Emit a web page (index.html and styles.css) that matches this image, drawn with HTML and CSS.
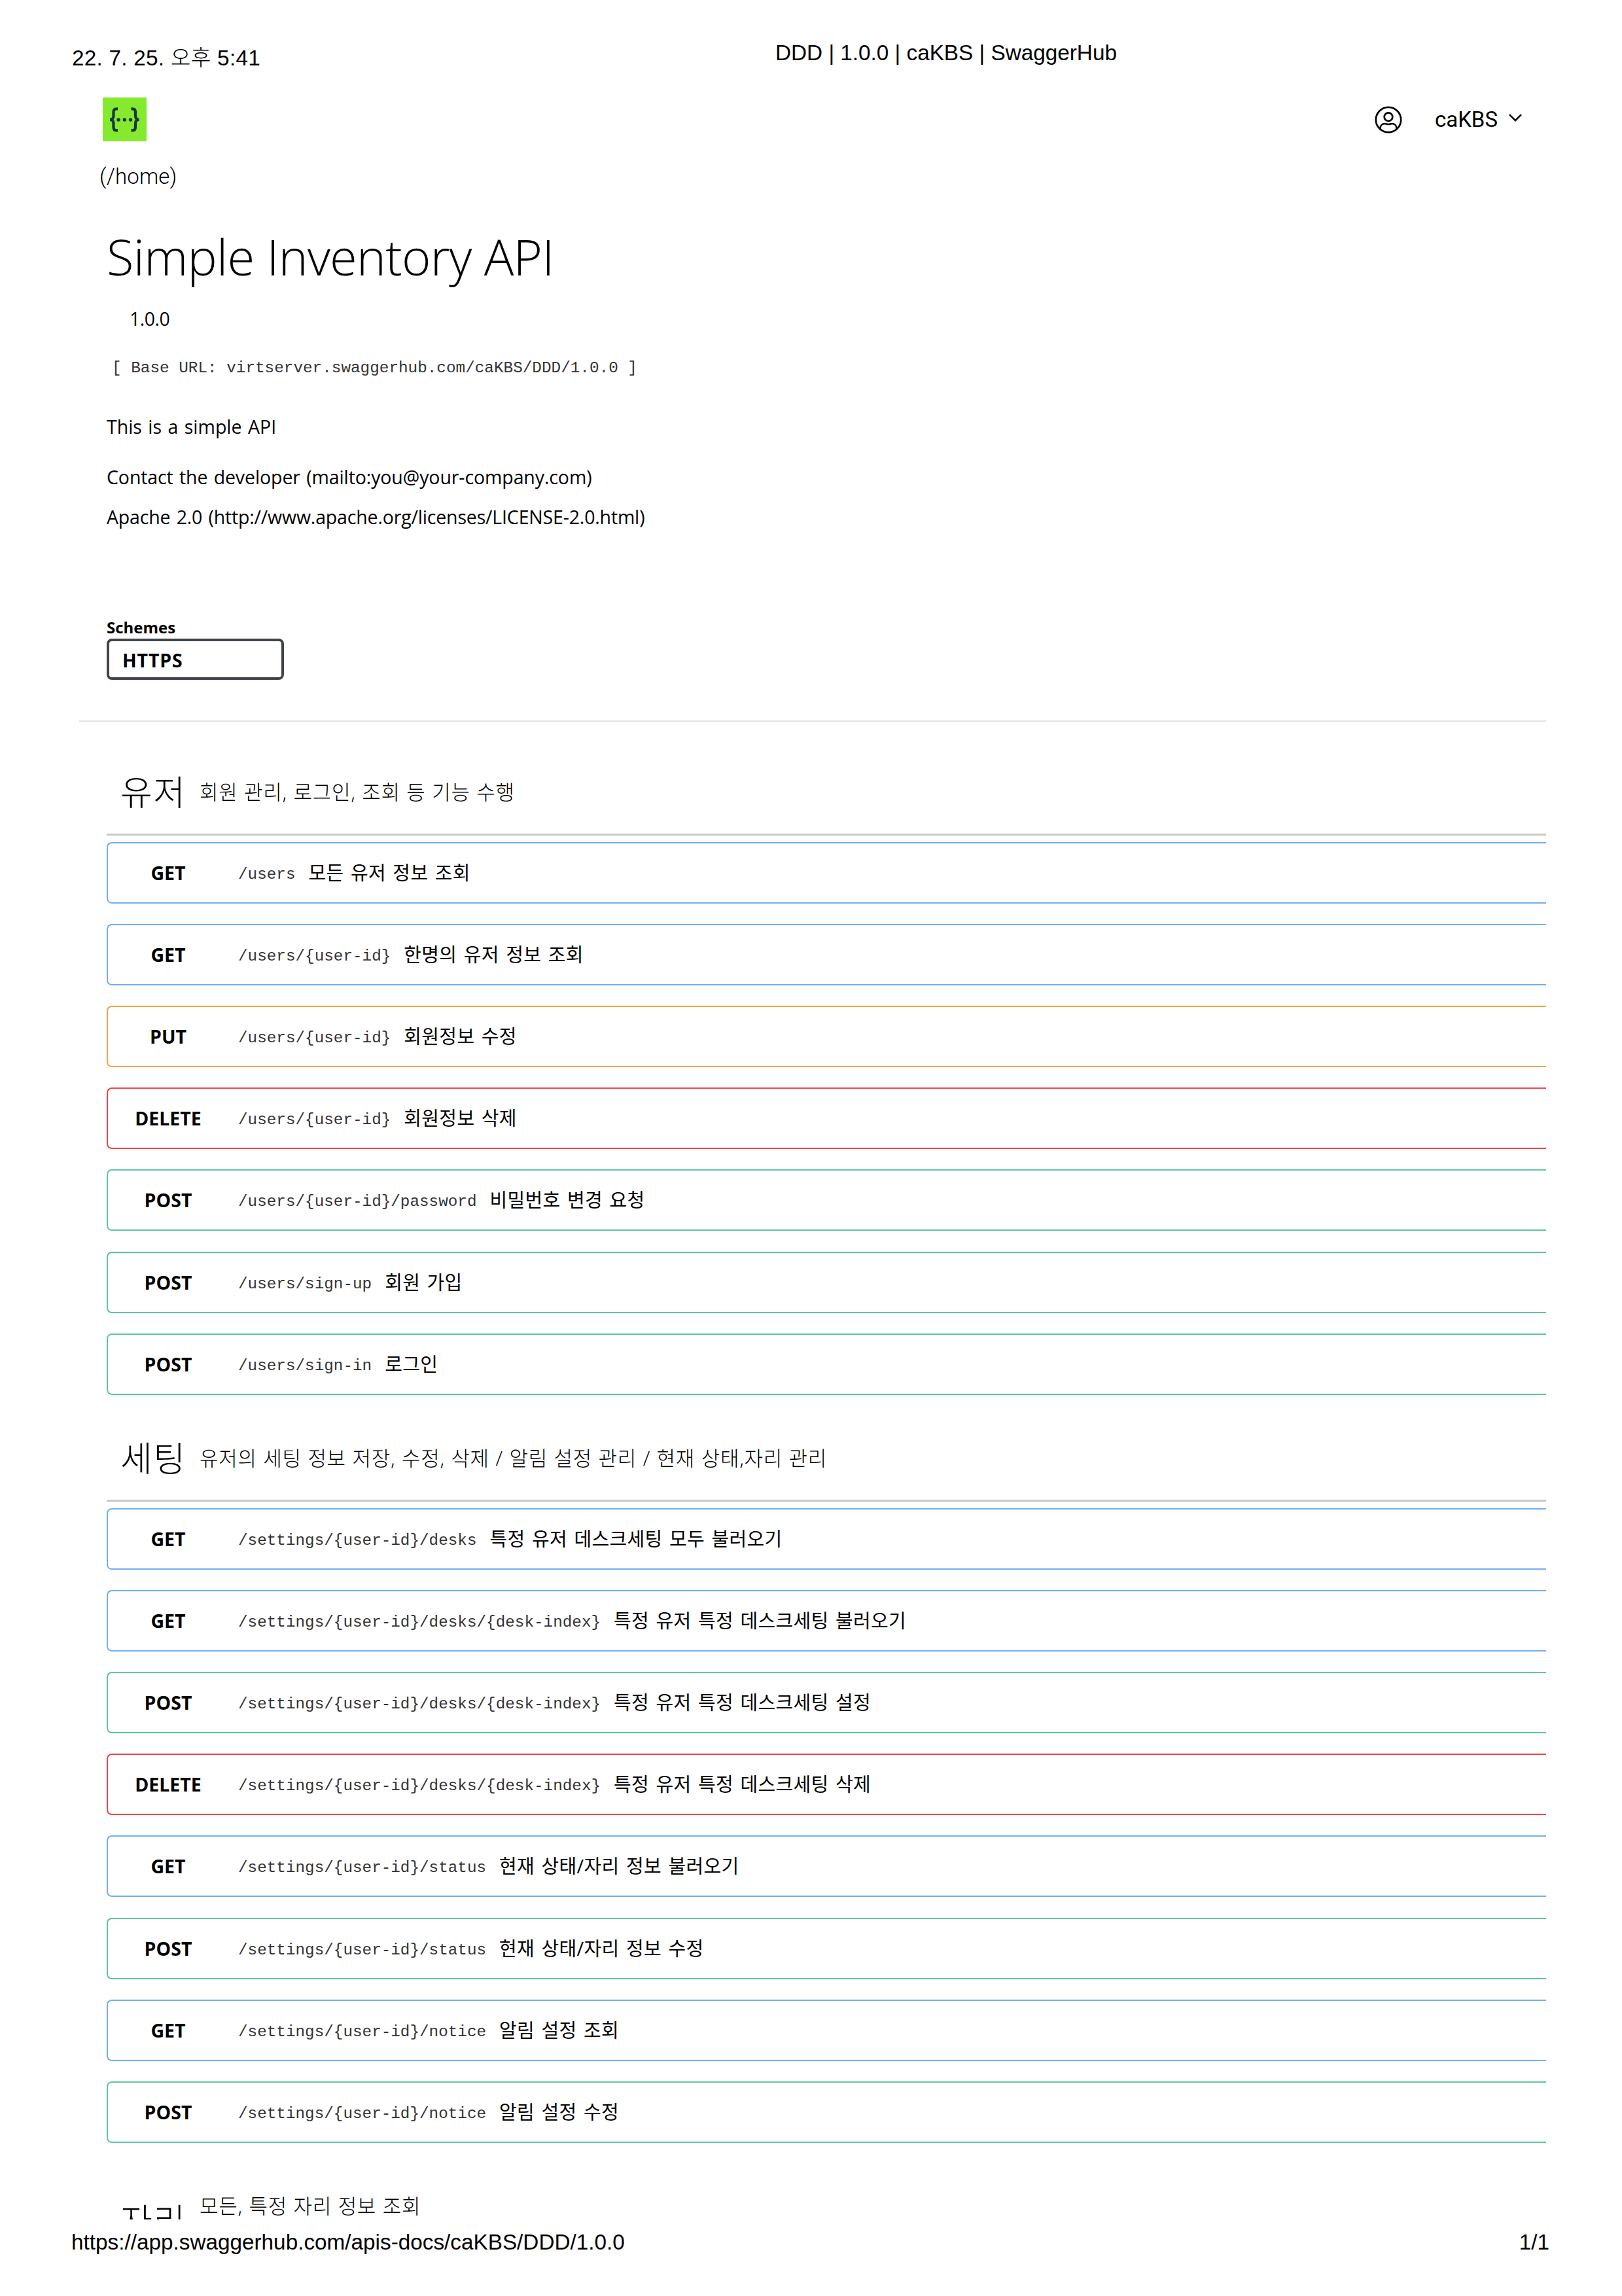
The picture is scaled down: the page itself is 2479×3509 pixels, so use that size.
FILE: index.html
```html
<!DOCTYPE html>
<html lang="ko">
<head>
<meta charset="utf-8">
<title>DDD | 1.0.0 | caKBS | SwaggerHub</title>
<link rel="stylesheet" href="styles.css">
</head>
<body>
<div class="page">
<header class="print-head"><span class="print-date">22. 7. 25. 오후 5:41</span><span class="print-title">DDD | 1.0.0 | caKBS | SwaggerHub</span></header>
<nav class="topbar">
<svg class="logo" viewBox="0 0 67 67"><rect width="67" height="67" fill="#85ea2d"/><g fill="none" stroke="#173647" stroke-width="4.2"><path d="M23 17.300h-2c-3 0-4.500 1.700-4.500 4.700v6c0 3.300-1.500 5.800-5.500 5.800 4 0 5.500 2.500 5.500 5.800v6c0 3 1.500 4.700 4.500 4.700h2"/><path d="M43.500 17.300h2c3 0 4.500 1.700 4.500 4.700v6c0 3.300 1.500 5.800 5.500 5.800-4 0-5.500 2.500-5.500 5.800v6c0 3-1.500 4.700-4.500 4.700h-2"/></g><g fill="#173647"><circle cx="24" cy="34" r="2.700"/><circle cx="33.300" cy="34" r="2.700"/><circle cx="42.600" cy="34" r="2.700"/></g></svg>
<div class="account"><svg class="user" viewBox="0 0 42 42" fill="none" stroke="#000" stroke-width="2.700"><circle cx="21" cy="21" r="19.200"/><circle cx="21" cy="16.700" r="6.300"/><path d="M8.500 35.500v-1c0-4.500 3-7.500 7-7.500 2 0 3 1 5.500 1s3.500-1 5.500-1c4 0 7 3 7 7.500v1"/></svg><span class="user-name">caKBS</span><svg class="chevron" viewBox="0 0 20 12" fill="none" stroke="#000" stroke-width="2.500"><path d="M1 1.200l9 9 9-9"/></svg></div>
</nav>
<div class="home">(/home)</div>
<section class="info">
<h1 class="title">Simple Inventory API</h1>
<div class="version">1.0.0</div>
<div class="base-url">[ Base URL: virtserver.swaggerhub.com/caKBS/DDD/1.0.0 ]</div>
<p class="description">This is a simple API</p>
<p class="contact">Contact the developer (mailto:you@your-company.com)</p>
<p class="license">Apache 2.0 (http://www.apache.org/licenses/LICENSE-2.0.html)</p>
</section>
<section class="schemes"><div class="schemes-label">Schemes</div><div class="select">HTTPS</div></section>
<main class="operations">
<section class="tag-section">
<div class="tag-head"><h2 class="tag">유저</h2><span class="tag-desc">회원 관리, 로그인, 조회 등 기능 수행</span></div>
<div class="op get"><b class="method">GET</b><code class="path">/users</code><span class="summary">모든 유저 정보 조회</span></div>
<div class="op get"><b class="method">GET</b><code class="path">/users/{user-id}</code><span class="summary">한명의 유저 정보 조회</span></div>
<div class="op put"><b class="method">PUT</b><code class="path">/users/{user-id}</code><span class="summary">회원정보 수정</span></div>
<div class="op delete"><b class="method">DELETE</b><code class="path">/users/{user-id}</code><span class="summary">회원정보 삭제</span></div>
<div class="op post"><b class="method">POST</b><code class="path">/users/{user-id}/password</code><span class="summary">비밀번호 변경 요청</span></div>
<div class="op post"><b class="method">POST</b><code class="path">/users/sign-up</code><span class="summary">회원 가입</span></div>
<div class="op post"><b class="method">POST</b><code class="path">/users/sign-in</code><span class="summary">로그인</span></div>
</section>
<section class="tag-section">
<div class="tag-head"><h2 class="tag">세팅</h2><span class="tag-desc">유저의 세팅 정보 저장, 수정, 삭제 / 알림 설정 관리 / 현재 상태,자리 관리</span></div>
<div class="op get"><b class="method">GET</b><code class="path">/settings/{user-id}/desks</code><span class="summary">특정 유저 데스크세팅 모두 불러오기</span></div>
<div class="op get"><b class="method">GET</b><code class="path">/settings/{user-id}/desks/{desk-index}</code><span class="summary">특정 유저 특정 데스크세팅 불러오기</span></div>
<div class="op post"><b class="method">POST</b><code class="path">/settings/{user-id}/desks/{desk-index}</code><span class="summary">특정 유저 특정 데스크세팅 설정</span></div>
<div class="op delete"><b class="method">DELETE</b><code class="path">/settings/{user-id}/desks/{desk-index}</code><span class="summary">특정 유저 특정 데스크세팅 삭제</span></div>
<div class="op get"><b class="method">GET</b><code class="path">/settings/{user-id}/status</code><span class="summary">현재 상태/자리 정보 불러오기</span></div>
<div class="op post"><b class="method">POST</b><code class="path">/settings/{user-id}/status</code><span class="summary">현재 상태/자리 정보 수정</span></div>
<div class="op get"><b class="method">GET</b><code class="path">/settings/{user-id}/notice</code><span class="summary">알림 설정 조회</span></div>
<div class="op post"><b class="method">POST</b><code class="path">/settings/{user-id}/notice</code><span class="summary">알림 설정 수정</span></div>
</section>
<section class="tag-section cut">
<div class="tag-head"><h2 class="tag">자리</h2><span class="tag-desc">모든, 특정 자리 정보 조회</span></div>
</section>
</main>
<footer class="print-foot"><span class="url">https://app.swaggerhub.com/apis-docs/caKBS/DDD/1.0.0</span><span class="page-no">1/1</span></footer>
</div>
</body>
</html>
```
FILE: styles.css
```css
* { box-sizing: border-box; }
body { margin: 0; background: #fff; color: #000; font-family: "Open Sans", "Noto Sans CJK KR", sans-serif; }
h1, h2, p { margin: 0; font-weight: 300; }
.page { width: 2479px; height: 3509px; overflow: hidden; white-space: nowrap; }
.print-head, .print-foot { font: 300 33.3px/40px "Liberation Sans", "Noto Sans CJK KR", sans-serif; }
.print-head { height: 149px; display: flex; }
.print-date { width: 1078px; padding: 69px 0 0 110px; letter-spacing: 0.25px; }
.print-title { padding: 61px 0 0 107px; }
.topbar { height: 68px; padding: 0 153px 0 157px; display: flex; justify-content: space-between; }
.logo { width: 67px; height: 67px; }
.account { display: flex; align-items: center; font: 33px/40px Roboto, sans-serif; }
.user { width: 42px; height: 42px; margin-right: 50px; }
.user-name { margin-right: 17px; }
.chevron { width: 20px; height: 12px; margin-bottom: 6px; }
.home { height: 131px; padding: 33px 0 0 152px; font: 300 33px/40px Roboto, sans-serif; letter-spacing: 0.15px; }
.info { height: 596px; padding-left: 163px; font-size: 28.5px; }
.title { height: 119px; font-size: 76px; line-height: 88px; font-weight: 330; letter-spacing: -0.75px; }
.version { height: 76px; padding-left: 35px; line-height: 40px; letter-spacing: -0.5px; }
.base-url { height: 89px; padding-left: 8px; line-height: 40px; font-family: "Liberation Mono", monospace; font-size: 24.33px; color: #333; }
.description, .contact, .license { line-height: 40px; font-weight: 400; word-spacing: 2px; }
.description { height: 77px; }
.contact { height: 61px; letter-spacing: -0.1px; }
.license { letter-spacing: -0.17px; }
.schemes { height: 159px; margin-left: 121px; padding-left: 42px; width: 2242px; border-bottom: 2px solid #e3e3e3; font-weight: 700; }
.schemes-label { height: 32px; font-size: 24px; line-height: 30px; }
.select { width: 271px; height: 63px; border: 4px solid #41444e; border-radius: 8px; padding-left: 20px; font-size: 28.5px; line-height: 58px; letter-spacing: 0.8px; }
.operations { margin-left: 163px; width: 2200px; height: 2289px; padding-top: 42px; overflow: hidden; }
.tag-head { height: 132px; display: flex; border-bottom: 3px solid #c7c7ca; margin-bottom: 9.7px; }
.tag { width: 142px; padding: 36px 0 0 21px; font-size: 53px; line-height: 60px; letter-spacing: 1.5px; }
.tag-desc { font-size: 31px; line-height: 40px; padding-top: 45px; font-weight: 300; letter-spacing: 0.7px; word-spacing: 0.9px; }
.cut .tag { padding-top: 58px; }
.op { height: 94px; margin-bottom: 31.2px; border: 2.5px solid; border-right: 0; border-radius: 8px 0 0 8px; display: flex; align-items: center; line-height: 40px; }
.op.get { border-color: #71aef0; }
.op.put { border-color: #eea743; }
.op.delete { border-color: #ee4646; }
.op.post { border-color: #5dc69b; }
.method { width: 184px; text-align: center; font-size: 28.5px; color: #000; }
.path { font-family: "Liberation Mono", monospace; font-size: 24.3px; color: #333; margin: 0 20px 0 15px; padding-top: 6px; }
.summary { font-size: 29px; color: #000; letter-spacing: 0.35px; word-spacing: 2.5px; }
.print-foot { display: flex; justify-content: space-between; padding: 15px 111px 0 109px; }
```
